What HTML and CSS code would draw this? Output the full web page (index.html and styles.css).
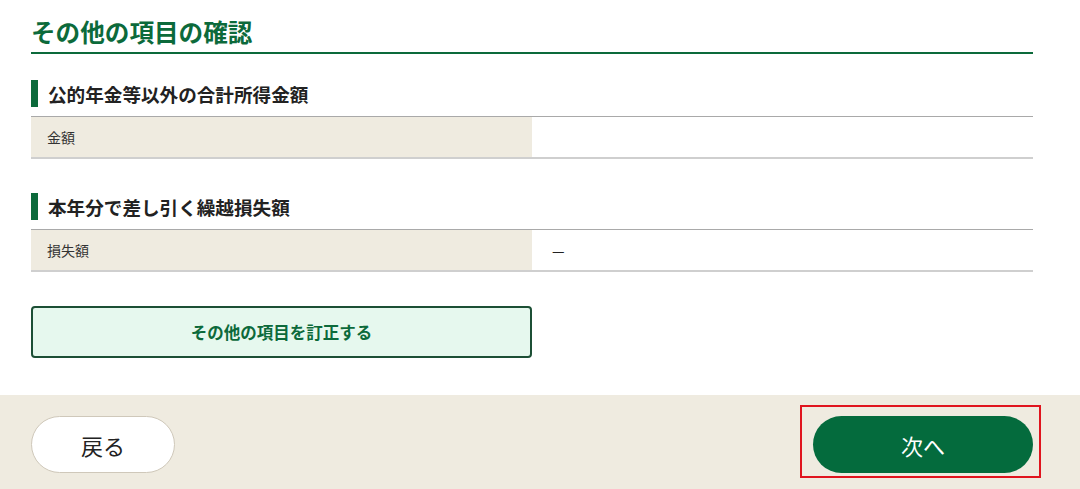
FILE: index.html
```html
<!DOCTYPE html>
<html lang="ja">
<head>
<meta charset="utf-8">
<link rel="stylesheet" href="styles.css">
</head>
<body>
<main class="content">
  <h1 class="page-title">その他の項目の確認</h1>

  <section class="block">
    <h2 class="sec-title">公的年金等以外の合計所得金額</h2>
    <div class="row">
      <div class="row-label">金額</div>
      <div class="row-value"></div>
    </div>
  </section>

  <section class="block block-2">
    <h2 class="sec-title">本年分で差し引く繰越損失額</h2>
    <div class="row">
      <div class="row-label">損失額</div>
      <div class="row-value">—</div>
    </div>
  </section>

  <button class="edit-btn" type="button">その他の項目を訂正する</button>
</main>

<footer class="footer">
  <button class="back-btn" type="button">戻る</button>
  <div class="next-wrap">
    <button class="next-btn" type="button">次へ</button>
    <span class="highlight"></span>
  </div>
</footer>
</body>
</html>
```

FILE: styles.css
```css
* { box-sizing: border-box; }

html, body {
  margin: 0;
  padding: 0;
  background: #ffffff;
  font-family: "Noto Sans CJK JP", "Noto Sans", sans-serif;
  color: #222222;
}

.content {
  width: 1002px;
  margin-left: 31px;
  padding-top: 14px;
  padding-bottom: 37px;
}

.page-title {
  margin: 0;
  font-size: 24.6px;
  line-height: 34px;
  font-weight: 700;
  color: #0c6a3b;
  padding-bottom: 4px;
  border-bottom: 2px solid #0c6a3b;
}

.block { margin-top: 26px; }
.block-2 { margin-top: 34px; }

.sec-title {
  margin: 0 0 9px 0;
  font-size: 18.6px;
  font-weight: 700;
  line-height: 27px;
  color: #222222;
  border-left: 7px solid #0c6a3b;
  padding-left: 10px;
}

.row {
  display: flex;
  border-top: 1px solid #a9a9a9;
  border-bottom: 2px solid #cfcfcf;
  height: 43px;
}

.row-label {
  width: 501px;
  background: #efebe0;
  font-size: 14px;
  color: #333333;
  padding-left: 16px;
  display: flex;
  align-items: center;
}

.row-value {
  flex: 1;
  padding-left: 20px;
  font-size: 14px;
  color: #222222;
  display: flex;
  align-items: center;
}

.edit-btn {
  display: block;
  margin-top: 34px;
  width: 501px;
  height: 52px;
  background: #e6f8ee;
  border: 2px solid #1c4f35;
  border-radius: 4px;
  font-family: "Noto Sans CJK JP", "Noto Sans", sans-serif;
  font-size: 16.5px;
  font-weight: 700;
  color: #0c6a3b;
  cursor: pointer;
}

.footer {
  background: #efebe0;
  height: 94px;
  display: flex;
  justify-content: space-between;
  align-items: flex-start;
  padding: 21px 47px 0 31px;
}

.back-btn {
  width: 144px;
  height: 57px;
  background: #ffffff;
  border: 1px solid #cfc8ba;
  border-radius: 29px;
  font-family: "Noto Sans CJK JP", "Noto Sans", sans-serif;
  font-size: 22px;
  color: #222222;
}

.next-wrap {
  position: relative;
}

.next-btn {
  display: block;
  width: 220px;
  height: 57px;
  background: #046b3d;
  border: none;
  border-radius: 29px;
  font-family: "Noto Sans CJK JP", "Noto Sans", sans-serif;
  font-size: 22px;
  color: #ffffff;
}

.highlight {
  position: absolute;
  left: -13px;
  top: -11px;
  width: 241px;
  height: 73px;
  border: 2px solid #e0141e;
  pointer-events: none;
}
```
